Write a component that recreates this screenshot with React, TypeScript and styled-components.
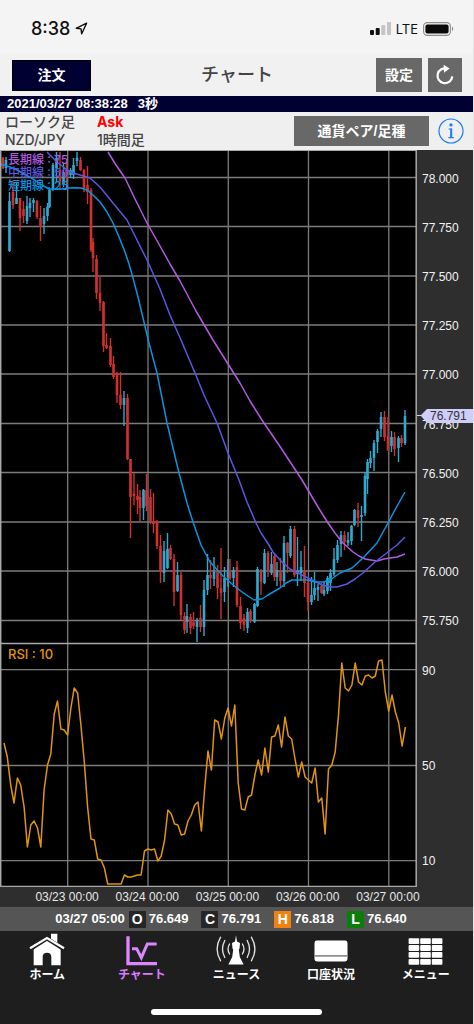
import React from "react";
import styled, { createGlobalStyle } from "styled-components";

const sans = `"Liberation Sans", "Noto Sans CJK JP", sans-serif`;
const ui = `Inter, "Noto Sans CJK JP", sans-serif`;

const COLORS = {
  up: "#2fa9cf",
  down: "#cf3030",
  short: "#0a94e0",
  mid: "#5b57de",
  long: "#b35ae2",
  rsi: "#e2950a",
  grid: "#7c7c7c",
  frame: "#a9a9a9",
};

const GlobalStyle = createGlobalStyle`
  *, *::before, *::after { box-sizing: border-box; }
  body { margin: 0; background: #1e1e1e; }
  button { margin: 0; padding: 0; border: 0; cursor: pointer; }
`;

const Screen = styled.div`
  display: flex;
  flex-direction: column;
  min-height: 100vh;
  background: #1e1e1e;
  border-right: 1px solid #e4e4e4;
  font-family: ${sans};
`;

/* ---------- status bar ---------- */

const StatusBar = styled.div`
  display: flex;
  align-items: center;
  justify-content: space-between;
  height: 54px;
  padding: 3px 19px 0 31px;
  background: #f4f4f4;
  color: #111;
  font-family: ${ui};
`;

const StatusGroup = styled.div`
  display: flex;
  align-items: center;
  gap: 5px;
`;

const Clock = styled.span`
  font-size: 18px;
  font-weight: 500;
  line-height: 24px;
`;

const Network = styled.span`
  font-size: 13px;
  line-height: 16px;
`;

/* ---------- title bar ---------- */

const TitleBar = styled.header`
  display: grid;
  grid-template-columns: 1fr auto 1fr;
  align-items: center;
  height: 42px;
  padding: 0 11px 0 12px;
  background: #f1f1f1;
`;

const Title = styled.h1`
  margin: 0;
  color: #444;
  font-size: 18px;
  font-weight: 500;
  line-height: 24px;
`;

const TitleActions = styled.div`
  display: flex;
  justify-content: flex-end;
  gap: 6px;
`;

const OrderButton = styled.button`
  width: 79px;
  height: 31px;
  border: 1px solid #000;
  background: #000033;
  color: #fff;
  font: 700 14px/20px ${sans};
`;

const GrayButton = styled.button<{ $width: number; $height?: number }>`
  display: flex;
  align-items: center;
  justify-content: center;
  width: ${(p) => p.$width}px;
  height: ${(p) => p.$height ?? 34}px;
  background: #686868;
  color: #fff;
  font: 700 14px/20px ${sans};
`;

/* ---------- time and pair ---------- */

const TimeBar = styled.div`
  display: flex;
  gap: 10px;
  height: 16px;
  padding: 0 7px;
  background: #000033;
  color: #fff;
  font-size: 13px;
  font-weight: 700;
  line-height: 16px;
`;

const PairBar = styled.div`
  display: flex;
  align-items: center;
  height: 38px;
  padding: 0 9px 0 5px;
  background: #efefef;
  color: #444;
  font: 500 14px/18px ${ui};
`;

const PairColumn = styled.div<{ $width: number }>`
  display: flex;
  flex-direction: column;
  width: ${(p) => p.$width}px;
  white-space: nowrap;
`;

const Ask = styled.strong`
  color: #f00;
  font-weight: 700;
`;

const PairActions = styled.div`
  display: flex;
  align-items: center;
  gap: 9px;
  margin-left: auto;
`;

const InfoButton = styled.button`
  display: flex;
  background: none;
`;

/* ---------- chart ---------- */

const ChartArea = styled.main`
  display: grid;
  grid-template-columns: 1fr 56px;
  background: #2e2e2e;
`;

const Plot = styled.div`
  position: relative;
  height: 737px;
  background: #000;
`;

const PlotDrawing = styled.svg`
  display: block;
  width: 100%;
  height: 737px;
`;

const Legend = styled.div`
  position: absolute;
  top: 3px;
  left: 8px;
  display: flex;
  flex-direction: column;
  font: 500 12px/13px ${ui};
`;

const LegendItem = styled.span<{ $color: string }>`
  color: ${(p) => p.$color};
  white-space: nowrap;
`;

const RsiLegend = styled.span`
  position: absolute;
  top: 496px;
  left: 8px;
  color: ${COLORS.rsi};
  font: 500 13px/16px ${ui};
`;

const Axis = styled.div`
  position: relative;
  display: flex;
  flex-direction: column;
  padding-left: 5px;
  color: #f2f2f2;
  font-size: 12px;
  line-height: 16px;
`;

const PriceScale = styled.div`
  display: flex;
  flex-direction: column;
  justify-content: space-between;
  height: 458px;
  margin-top: 21px;
`;

const RsiScale = styled.div`
  display: flex;
  flex-direction: column;
  justify-content: space-between;
  height: 206px;
  margin-top: 34px;
`;

const PriceTag = styled.div`
  position: absolute;
  top: 259px;
  left: 0;
  right: 0;
  height: 14px;
  padding-left: 13px;
  background: #cfcdfa;
  clip-path: polygon(0 6px, 4px 6px, 10px 0, 100% 0, 100% 100%, 10px 100%, 4px 7px, 0 7px);
  color: #333;
  line-height: 14px;
`;

const DateRow = styled.div`
  display: flex;
  height: 20px;
  padding: 0 45px 0 27px;
  background: #2e2e2e;
  color: #e6e6e6;
  font-size: 12px;
  line-height: 20px;
`;

const DateLabel = styled.span`
  display: flex;
  flex: 1;
  justify-content: center;
  min-width: 0;
  white-space: nowrap;
`;

const OhlcBar = styled.div`
  display: flex;
  align-items: center;
  justify-content: center;
  height: 24px;
  padding-right: 11px;
  background: #555;
  color: #fff;
  font-size: 13px;
  font-weight: 700;
  line-height: 16px;
`;

const OhlcItem = styled.span`
  display: flex;
  align-items: center;
  gap: 3px;
  margin-left: 4px;
  & + & { margin-left: 13px; }
`;

const OhlcBadge = styled.span<{ $color: string }>`
  width: 17px;
  height: 17px;
  background: ${(p) => p.$color};
  font-size: 14px;
  line-height: 17px;
  text-align: center;
`;

/* ---------- tab bar ---------- */

const TabBar = styled.nav`
  display: flex;
  padding-top: 2px;
`;

const Tab = styled.a<{ $active?: boolean }>`
  display: flex;
  flex: 1;
  flex-direction: column;
  align-items: center;
  gap: 1px;
  color: ${(p) => (p.$active ? "#d77bff" : "#fff")};
  font-size: 12px;
  font-weight: 700;
  line-height: 16px;
  text-decoration: none;
`;

const HomeIndicator = styled.div`
  width: 36%;
  height: 6px;
  margin: 26px auto 0;
  border-radius: 3px;
  background: #fff;
`;

/* ---------- data ---------- */

type Candle = [x: number, high: number, low: number, top: number, bottom: number, up: 0 | 1];

const candles: Candle[] = [
  [3, 157, 169, 158, 168, 0], [6, 157, 173, 160, 168, 1], [9.5, 192, 252, 201, 251, 1],
  [13, 182, 209, 192, 205, 0], [16.5, 182, 204, 198, 204, 1], [20, 198, 231, 198, 218, 0],
  [23.5, 201, 223, 209, 216, 0], [27, 196, 224, 206, 221, 1], [30, 198, 217, 203, 208, 1],
  [33.5, 198, 212, 200, 203, 1], [37, 200, 219, 201, 217, 0], [40.5, 206, 241, 218, 227, 0],
  [44, 208, 234, 216, 224, 1], [47.5, 203, 221, 207, 216, 1], [49.5, 189, 208, 190, 207, 1],
  [53, 163, 191, 165, 190, 1], [56.5, 152, 182, 158, 168, 1], [60, 152, 188, 170, 185, 0],
  [63.5, 163, 187, 172, 184, 1], [66.5, 162, 188, 170, 178, 0], [70.5, 168, 178, 170, 175, 1],
  [73.5, 158, 179, 165, 175, 1], [77, 152, 166, 158, 161, 1], [80.5, 157, 171, 160, 170, 0],
  [84, 169, 192, 170, 188, 0], [87.5, 166, 204, 185, 192, 0], [91, 188, 252, 190, 250, 0],
  [93, 238, 272, 242, 258, 0], [96.5, 255, 299, 259, 293, 0], [100, 276, 311, 293, 303, 0],
  [103.5, 301, 352, 302, 346, 0], [106.5, 333, 349, 345, 348, 0], [110.5, 338, 367, 346, 365, 0],
  [113.5, 356, 379, 364, 377, 0], [117, 372, 403, 373, 395, 0], [120.5, 372, 409, 395, 405, 0],
  [124, 391, 426, 398, 405, 1], [127.5, 394, 460, 398, 459, 0], [130.5, 459, 538, 459, 497, 0],
  [134, 473, 505, 494, 496, 0], [137.5, 484, 514, 496, 500, 0], [140, 490, 521, 497, 508, 0],
  [143.5, 489, 520, 490, 508, 1], [146.5, 474, 511, 490, 506, 0], [150.5, 489, 524, 497, 521, 0],
  [153.5, 493, 533, 521, 524, 0], [157, 520, 549, 522, 546, 0], [160.5, 535, 583, 546, 572, 0],
  [164, 541, 582, 551, 573, 1], [167.5, 533, 569, 549, 568, 1], [170.5, 545, 560, 548, 559, 0],
  [174, 554, 606, 559, 592, 0], [177.5, 562, 592, 575, 591, 1], [181, 572, 620, 575, 615, 0],
  [184.5, 612, 634, 616, 630, 0], [187, 604, 633, 616, 622, 1], [190.5, 614, 634, 617, 628, 0],
  [193.5, 612, 629, 622, 626, 0], [197, 618, 642, 620, 627, 1], [200.5, 605, 632, 618, 627, 0],
  [204, 580, 636, 590, 627, 1], [207.5, 554, 595, 575, 590, 1], [210.5, 560, 589, 575, 578, 0],
  [214, 557, 586, 572, 579, 1], [217.5, 565, 599, 571, 588, 0], [221, 548, 619, 588, 593, 0],
  [224.5, 567, 602, 578, 592, 1], [228, 559, 587, 571, 577, 1], [230, 559, 580, 571, 578, 0],
  [233.5, 567, 587, 570, 578, 1], [237, 561, 607, 567, 605, 0], [240.5, 597, 629, 606, 623, 0],
  [244, 614, 631, 618, 625, 0], [247.5, 608, 633, 612, 628, 1], [250.5, 609, 623, 611, 621, 0],
  [254.5, 603, 623, 604, 622, 1], [257.5, 567, 607, 569, 606, 1], [261, 569, 595, 570, 582, 0],
  [264.5, 549, 584, 553, 583, 1], [268, 551, 577, 553, 570, 0], [271.5, 552, 575, 564, 573, 1],
  [274.5, 553, 581, 556, 577, 0], [277, 562, 586, 570, 577, 1], [280.5, 558, 587, 570, 581, 0],
  [284, 536, 587, 543, 581, 1], [287.5, 542, 573, 543, 553, 0], [290.5, 526, 558, 529, 556, 1],
  [294.5, 526, 577, 529, 575, 0], [297.5, 537, 586, 571, 574, 1], [301, 551, 581, 567, 573, 1],
  [304.5, 546, 597, 571, 583, 0], [308, 580, 611, 583, 602, 0], [311.5, 577, 605, 595, 602, 1],
  [314.5, 572, 600, 588, 595, 1], [318, 584, 601, 587, 590, 1], [321.5, 583, 594, 586, 593, 0],
  [324, 581, 596, 590, 594, 1], [327.5, 576, 594, 578, 591, 1], [330.5, 569, 591, 573, 583, 1],
  [334, 548, 576, 559, 574, 1], [337.5, 540, 563, 545, 560, 1], [341, 531, 557, 535, 544, 1],
  [344.5, 531, 550, 535, 542, 0], [348, 532, 546, 540, 543, 1], [351.5, 525, 545, 526, 541, 1],
  [354.5, 509, 526, 510, 525, 1], [358, 503, 527, 510, 518, 0], [361.5, 506, 541, 515, 517, 1],
  [365, 472, 516, 476, 513, 1], [367.5, 459, 494, 462, 479, 1], [370.5, 451, 468, 458, 463, 1],
  [374, 440, 471, 443, 458, 1], [377.5, 429, 453, 431, 442, 1], [381, 412, 437, 417, 429, 1],
  [384.5, 411, 441, 417, 437, 0], [388, 417, 451, 436, 450, 0], [391.5, 431, 452, 437, 446, 1],
  [394.5, 432, 456, 437, 449, 0], [398.5, 436, 462, 438, 448, 1], [401.5, 435, 447, 438, 443, 0],
  [405, 410, 445, 416, 443, 1],
];

const shortAverage =
  "0,164 10,167 17,170 26,175 33,179 42,185 49,189 63,189 69,188 75,187.7 81,188 87,190 93,195 100,202 107,212 113,223 119,237 125,252 129,264 133,278 138,297 143,318 149,343 157,373 167,423 179,473 187,503 193,522 201,545 210,562 223,576 232,584 242,592 248,596 254,600 262,599 268,595 280,588 286,583 292,580 307,580 316,582 323,582 330,580 340,573 352,568 363,558 377,543 388,523 396,508 405,492";
const midAverage =
  "47,152 58,163 70,172 80,175 90,178 100,187 113,203 127,220 137,240 147,260 160,289 170,315 181,340 195,373 204,395 217,423 228,453 239,480 247,502 256,523 261,533 267,542 273,552 281,561 290,569 300,574 310,579 322,585 330,587 337,587 347,584 355,579 363,573 375,562 388,552 397,545 405,537";
const longAverage =
  "108,152 116,165 125,178 136,201 147,223 160,246 170,264 180,281 196,311 213,340 228,364 240,383 250,401 262,420 281,448 302,480 308,490 318,507 328,523 335,533 342,542 353,552 359,556 365,559 377,561 384,559 390,558 397,557 405,554";

const rsi = [
  103, 117, 145, 163, 138, 145, 167, 207, 185, 181, 188, 207, 150, 125, 114, 74, 61, 89, 90, 95,
  68, 48, 53, 85, 122, 167, 199, 200, 219, 220, 228, 244, 244, 244, 244, 244, 235, 237, 237, 236,
  235, 235, 211, 209, 210, 209, 221, 216, 200, 170, 174, 184, 185, 195, 194, 181, 175, 165, 162, 191,
  148, 111, 130, 80, 82, 99, 78, 68, 86, 65, 143, 169, 170, 157, 155, 135, 120, 135, 108, 132,
  97, 96, 85, 107, 77, 96, 99, 119, 137, 122, 137, 140, 143, 128, 162, 158, 194, 129, 125, 112,
  75, 23, 48, 51, 45, 23, 42, 45, 36, 35, 38, 36, 21, 20, 52, 71, 55, 72, 83, 106, 87,
];
const rsiPoints = rsi.map((y, i) => `${(4 + i * 3.345).toFixed(1)},${640 + y}`).join(" ");

const priceGrid = [177.5, 226.5, 276, 325, 374, 423.5, 472.5, 522, 571, 620.5];
const rsiGrid = [669.7, 765.5, 860.7];
const dayGrid = [67.7, 148, 228.3, 308.5, 388.8];

const prices = ["78.000", "77.750", "77.500", "77.250", "77.000", "76.750", "76.500", "76.250", "76.000", "75.750"];
const dates = ["03/23 00:00", "03/24 00:00", "03/25 00:00", "03/26 00:00", "03/27 00:00"];
const ohlc = [
  { key: "O", value: "76.649", color: "#262626" },
  { key: "C", value: "76.791", color: "#262626" },
  { key: "H", value: "76.818", color: "#f0820f" },
  { key: "L", value: "76.640", color: "#0a7d0a" },
];

/* ---------- drawings ---------- */

const LocationIcon = () => (
  <svg width="13" height="13" viewBox="0 0 13 13" fill="none" stroke="#111" strokeWidth="1.4" strokeLinejoin="round">
    <path d="M11.6 1.2 1.2 6.3 6 6.9 6.7 11.8Z" />
  </svg>
);

const SignalIcon = () => (
  <svg width="21" height="13" viewBox="0 0 21 13">
    <rect x="0" y="8" width="4" height="5" rx="1" fill="#111" />
    <rect x="5.7" y="6" width="4" height="7" rx="1" fill="#111" />
    <rect x="11.3" y="3" width="4" height="10" rx="1" fill="#c4c4c4" />
    <rect x="17" y="0" width="4" height="13" rx="1" fill="#c4c4c4" />
  </svg>
);

const BatteryIcon = () => (
  <svg width="31" height="14" viewBox="0 0 31 14">
    <rect x="0.6" y="0.6" width="26.8" height="12.8" rx="3.6" fill="none" stroke="#8c8c8c" strokeWidth="1.1" />
    <rect x="2.4" y="2.4" width="23.2" height="9.2" rx="2" fill="#0a0a0a" />
    <path d="M29 4.8c1.6.6 1.6 3.8 0 4.4Z" fill="#8c8c8c" />
  </svg>
);

const ReloadIcon = () => (
  <svg width="20" height="22" viewBox="0 0 20 22" fill="none">
    <path d="M12.2 4.7A7.4 7.4 0 1 0 17.3 12.4" stroke="#fff" strokeWidth="2.2" />
    <path d="M8.6 0.8 14.6 4.6 9 8.8Z" fill="#fff" />
  </svg>
);

const InfoIcon = () => (
  <svg width="26" height="26" viewBox="0 0 26 26" fill="none">
    <circle cx="13" cy="13" r="12" stroke="#1a7bf2" strokeWidth="1.2" />
    <circle cx="13" cy="6.9" r="1.6" fill="#1a7bf2" />
    <path d="M10.6 11h2.7v8.4M10.4 19.7h5.4" stroke="#1a7bf2" strokeWidth="1.2" />
    <path d="M13.2 10.6v9" stroke="#1a7bf2" strokeWidth="2" />
  </svg>
);

const HomeIcon = () => (
  <svg width="36" height="33" viewBox="85 160 108 99">
    <path d="M151 162h19v30l-19-14Z" fill="#fff" />
    <path d="M99 207 139 180 180 207V257H152V232Q152 219 139 219T126 232V257H99Z" fill="#fff" />
    <path d="M88 209 139 177 190 209" fill="none" stroke="#1e1e1e" strokeWidth="12" />
    <path d="M88 206 139 175 190 206" fill="none" stroke="#fff" strokeWidth="7" />
  </svg>
);

const ChartIcon = () => (
  <svg width="36" height="33" viewBox="370 160 108 99" fill="none" stroke="#dc86ff">
    <path d="M382 170V252H469" strokeWidth="10" />
    <path d="M394 207H408L422 234 440 193H468" strokeWidth="9" />
  </svg>
);

const NewsIcon = () => (
  <svg width="40" height="33" viewBox="0 0 40 33" fill="none" stroke="#e8e8e8" strokeWidth="1.3" strokeLinecap="round">
    <path
      d="M20 2.2 21 8.6 24 10 23.5 15.5 22.8 16.5 23.8 24 27.6 31.4H12.4L16.2 24 17.2 16.5 16.5 15.5 16 10 19 8.6Z"
      fill="#fff"
      stroke="none"
    />
    <path d="M13.6 11Q10.4 16 13.6 21M8.8 7.5Q4.2 16 8.8 24.5M4.6 4.2Q-2.4 16 4.6 27.8" />
    <path d="M26.4 11Q29.6 16 26.4 21M31.2 7.5Q35.8 16 31.2 24.5M35.4 4.2Q42.4 16 35.4 27.8" />
  </svg>
);

const AccountIcon = () => (
  <svg width="36" height="33" viewBox="0 0 36 33">
    <rect x="1.5" y="7.5" width="33" height="21" rx="2.4" fill="#fff" />
    <path d="M1.5 22.8H34.5" stroke="#8f8f8f" strokeWidth="1.8" />
  </svg>
);

const MenuIcon = () => (
  <svg width="36" height="33" viewBox="0 0 36 33" fill="#fff">
    {[0, 1, 2, 3].map((row) =>
      [0, 1, 2].map((col) => (
        <rect key={`${row}-${col}`} x={0.6 + col * 11.6} y={5.2 + row * 6.9} width="10.6" height="5.8" rx="0.8" />
      ))
    )}
  </svg>
);

const tabs = [
  { label: "ホーム", Icon: HomeIcon },
  { label: "チャート", Icon: ChartIcon, active: true },
  { label: "ニュース", Icon: NewsIcon },
  { label: "口座状況", Icon: AccountIcon },
  { label: "メニュー", Icon: MenuIcon },
];

const ChartDrawing = () => (
  <PlotDrawing viewBox="0 150 417 737" preserveAspectRatio="none" role="img" aria-label="NZD/JPY 1時間足">
    <g stroke={COLORS.grid} strokeWidth="1.3">
      {[...priceGrid, ...rsiGrid].map((y) => (
        <line key={y} x1="0" x2="416" y1={y} y2={y} />
      ))}
      {dayGrid.map((x) => (
        <line key={x} x1={x} x2={x} y1="151" y2="886" />
      ))}
    </g>
    {candles.map(([x, high, low, top, bottom, up]) => (
      <g key={x} fill={up ? COLORS.up : COLORS.down}>
        <rect x={x - 0.7} y={high} width="1.4" height={low - high} />
        <rect x={x - 1.3} y={top} width="2.6" height={bottom - top} />
      </g>
    ))}
    <g fill="none" strokeWidth="1.5" strokeLinejoin="round">
      <polyline points={longAverage} stroke={COLORS.long} />
      <polyline points={midAverage} stroke={COLORS.mid} />
      <polyline points={shortAverage} stroke={COLORS.short} />
      <polyline points={rsiPoints} stroke={COLORS.rsi} />
    </g>
    <g stroke={COLORS.frame} fill="none">
      <line x1="0" x2="416" y1="643.5" y2="643.5" strokeWidth="1.4" />
      <path d="M0.7 151V886.5H416.2V151" strokeWidth="1.5" />
      <path d="M0 150.5H417" strokeWidth="1" />
    </g>
  </PlotDrawing>
);

export default function App() {
  return (
    <>
      <GlobalStyle />
      <Screen>
        <StatusBar>
          <StatusGroup>
            <Clock>8:38</Clock>
            <LocationIcon />
          </StatusGroup>
          <StatusGroup>
            <SignalIcon />
            <Network>LTE</Network>
            <BatteryIcon />
          </StatusGroup>
        </StatusBar>

        <TitleBar>
          <OrderButton type="button">注文</OrderButton>
          <Title>チャート</Title>
          <TitleActions>
            <GrayButton type="button" $width={46}>設定</GrayButton>
            <GrayButton type="button" $width={34} aria-label="更新">
              <ReloadIcon />
            </GrayButton>
          </TitleActions>
        </TitleBar>

        <TimeBar>
          <span>2021/03/27 08:38:28</span>
          <span>3秒</span>
        </TimeBar>

        <PairBar>
          <PairColumn $width={92}>
            <span>ローソク足</span>
            <span>NZD/JPY</span>
          </PairColumn>
          <PairColumn $width={60}>
            <Ask>Ask</Ask>
            <span>1時間足</span>
          </PairColumn>
          <PairActions>
            <GrayButton type="button" $width={135} $height={30}>通貨ペア/足種</GrayButton>
            <InfoButton type="button" aria-label="情報">
              <InfoIcon />
            </InfoButton>
          </PairActions>
        </PairBar>

        <ChartArea>
          <Plot>
            <ChartDrawing />
            <Legend>
              <LegendItem $color={COLORS.long}>長期線 : 75</LegendItem>
              <LegendItem $color={COLORS.mid}>中期線 : 50</LegendItem>
              <LegendItem $color={COLORS.short}>短期線 : 25</LegendItem>
            </Legend>
            <RsiLegend>RSI : 10</RsiLegend>
          </Plot>
          <Axis>
            <PriceScale>
              {prices.map((p) => (
                <span key={p}>{p}</span>
              ))}
            </PriceScale>
            <RsiScale>
              <span>90</span>
              <span>50</span>
              <span>10</span>
            </RsiScale>
            <PriceTag>76.791</PriceTag>
          </Axis>
        </ChartArea>

        <DateRow>
          {dates.map((d) => (
            <DateLabel key={d}>{d}</DateLabel>
          ))}
        </DateRow>

        <OhlcBar>
          <span>03/27 05:00</span>
          {ohlc.map((o) => (
            <OhlcItem key={o.key}>
              <OhlcBadge $color={o.color}>{o.key}</OhlcBadge>
              {o.value}
            </OhlcItem>
          ))}
        </OhlcBar>

        <TabBar>
          {tabs.map(({ label, Icon, active }) => (
            <Tab key={label} href="#" $active={active} aria-current={active ? "page" : undefined}>
              <Icon />
              {label}
            </Tab>
          ))}
        </TabBar>
        <HomeIndicator />
      </Screen>
    </>
  );
}
